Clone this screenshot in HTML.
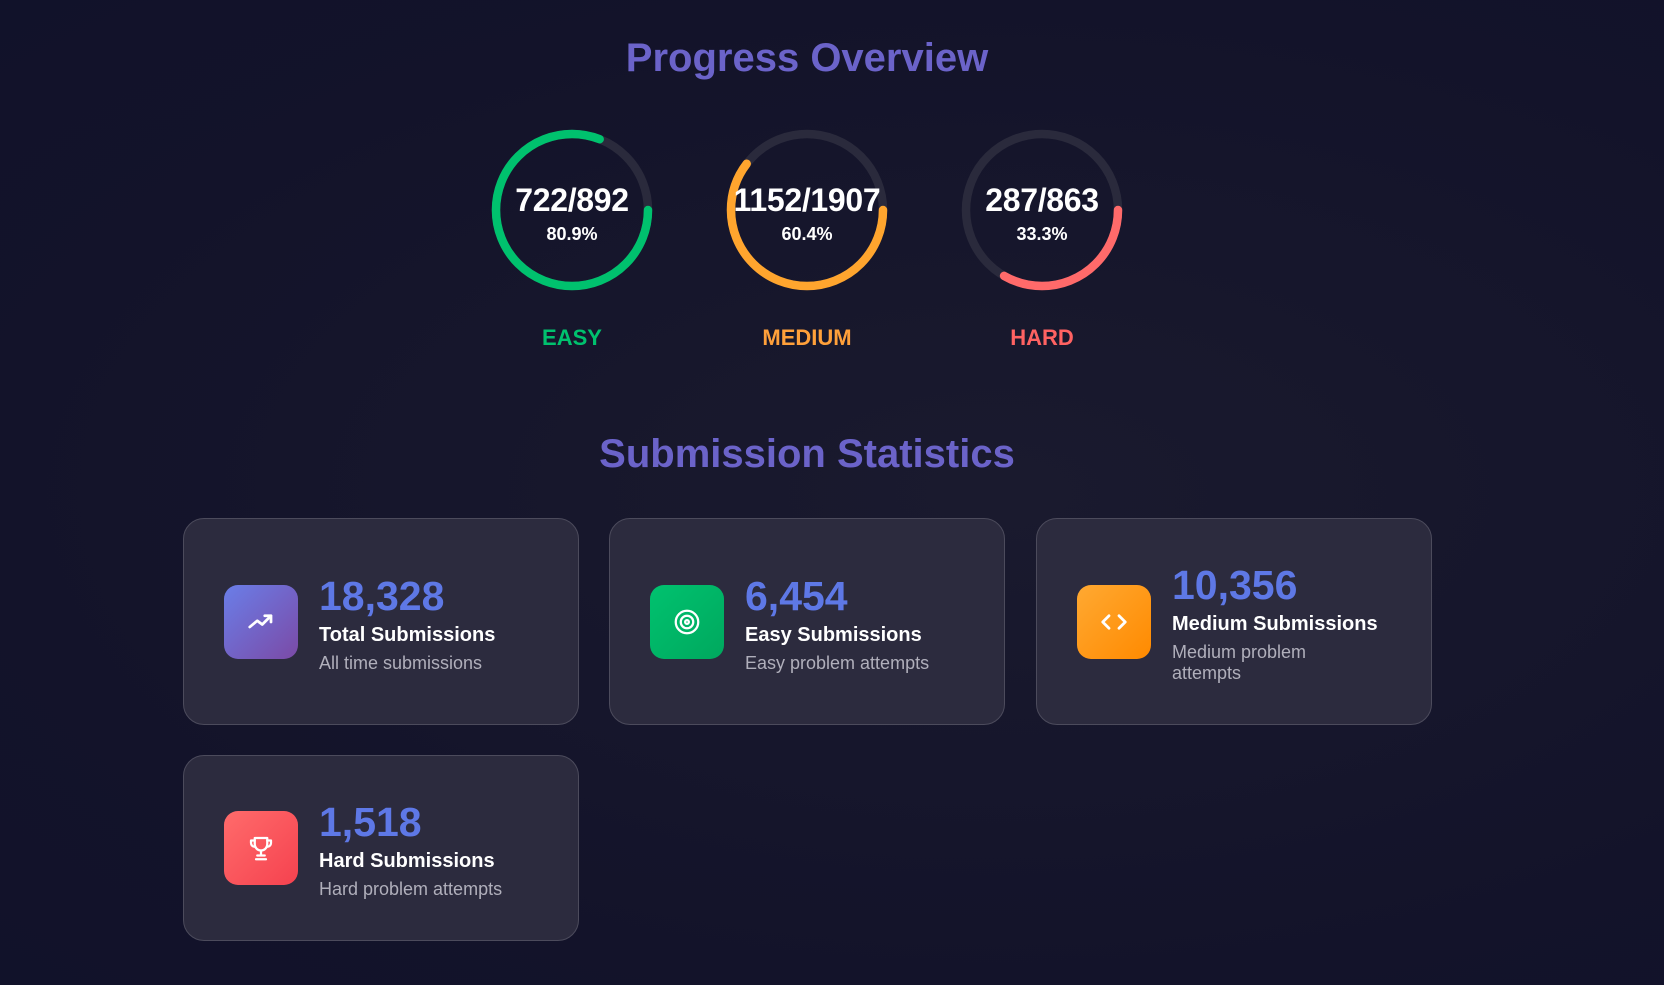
<!DOCTYPE html>
<html><head><style>
*{margin:0;padding:0;box-sizing:border-box}
body{width:1664px;height:985px;background:radial-gradient(ellipse at 60% 50%,#1a1a2e 0%,#13132a 70%,#11122a 100%);font-family:"Liberation Sans",sans-serif;position:relative;overflow:hidden;color:#fff}
.t{position:absolute;left:0;width:1614px;text-align:center;color:#6b63c9;font-weight:bold;font-size:40px}
.ring{position:absolute;width:170px;height:170px}
.num{position:absolute;width:240px;text-align:center;font-weight:bold;font-size:32px;letter-spacing:-0.3px}
.pct{position:absolute;width:200px;text-align:center;font-weight:bold;font-size:18px}
.lab{position:absolute;width:200px;text-align:center;font-weight:bold;font-size:22px}
.card{position:absolute;width:396px;background:#2c2b3e;border:1px solid #4c4b5c;border-radius:21px}
.ic{position:absolute;left:40px;width:74px;height:74px;border-radius:14px;display:flex;align-items:center;justify-content:center}
.tx{position:absolute;left:135px}
.n{color:#5e78e6;font-weight:bold;font-size:41px;line-height:46px}
.l{font-weight:bold;font-size:20px;line-height:26px;margin-top:3px}
.s{color:#b0afbb;font-size:18px;line-height:21px;margin-top:5px}
</style></head><body>
<div class="t" style="top:36px">Progress Overview</div>

<svg class="ring" style="left:487px;top:125px" viewBox="0 0 170 170"><circle cx="85" cy="85" r="76" fill="none" stroke="#2a2a3c" stroke-width="8.5"/><circle cx="85" cy="85" r="76" fill="none" stroke="#00c16e" stroke-width="8.5" stroke-linecap="round" stroke-dasharray="386.3 500"/></svg>
<svg class="ring" style="left:722px;top:125px" viewBox="0 0 170 170"><circle cx="85" cy="85" r="76" fill="none" stroke="#2a2a3c" stroke-width="8.5"/><circle cx="85" cy="85" r="76" fill="none" stroke="#ffa52e" stroke-width="8.5" stroke-linecap="round" stroke-dasharray="288.4 500"/></svg>
<svg class="ring" style="left:957px;top:125px" viewBox="0 0 170 170"><circle cx="85" cy="85" r="76" fill="none" stroke="#2a2a3c" stroke-width="8.5"/><circle cx="85" cy="85" r="76" fill="none" stroke="#ff6a6a" stroke-width="8.5" stroke-linecap="round" stroke-dasharray="159 500"/></svg>

<div class="num" style="left:452px;top:182px">722/892</div>
<div class="num" style="left:687px;top:182px">1152/1907</div>
<div class="num" style="left:922px;top:182px">287/863</div>
<div class="pct" style="left:472px;top:224px">80.9%</div>
<div class="pct" style="left:707px;top:224px">60.4%</div>
<div class="pct" style="left:942px;top:224px">33.3%</div>
<div class="lab" style="left:472px;top:325px;color:#00c16e">EASY</div>
<div class="lab" style="left:707px;top:325px;color:#ffa03a">MEDIUM</div>
<div class="lab" style="left:942px;top:325px;color:#ff6262">HARD</div>

<div class="t" style="top:432px">Submission Statistics</div>

<div class="card" style="left:183px;top:518px;height:207px">
<div class="ic" style="top:66px;background:linear-gradient(135deg,#6a7ee8,#7b4aa6)"><svg width="30" height="30" viewBox="0 0 24 24" fill="none" stroke="#fff" stroke-width="2.2" stroke-linecap="round" stroke-linejoin="round"><path d="M3 16l6-5 4 3 7-7M15 7h5v5"/></svg></div>
<div class="tx" style="top:54px"><div class="n">18,328</div><div class="l">Total Submissions</div><div class="s">All time submissions</div></div></div>

<div class="card" style="left:609px;top:518px;height:207px">
<div class="ic" style="top:66px;background:linear-gradient(135deg,#00c26f,#00a85e)"><svg width="30" height="30" viewBox="0 0 24 24" fill="none" stroke="#fff" stroke-width="1.8"><circle cx="12" cy="12" r="9"/><circle cx="12" cy="12" r="5"/><circle cx="12" cy="12" r="1.5"/></svg></div>
<div class="tx" style="top:54px"><div class="n">6,454</div><div class="l">Easy Submissions</div><div class="s">Easy problem attempts</div></div></div>

<div class="card" style="left:1036px;top:518px;height:207px">
<div class="ic" style="top:66px;background:linear-gradient(135deg,#ffa932,#ff8a00)"><svg width="30" height="30" viewBox="0 0 24 24" fill="none" stroke="#fff" stroke-width="2.2" stroke-linecap="round" stroke-linejoin="round"><path d="M8 7l-5 5 5 5M16 7l5 5-5 5"/></svg></div>
<div class="tx" style="top:43px"><div class="n">10,356</div><div class="l">Medium Submissions</div><div class="s">Medium problem<br>attempts</div></div></div>

<div class="card" style="left:183px;top:755px;height:186px">
<div class="ic" style="top:55px;background:linear-gradient(135deg,#ff6b6b,#f5424f)"><svg width="30" height="30" viewBox="0 0 24 24" fill="none" stroke="#fff" stroke-width="1.8" stroke-linecap="round" stroke-linejoin="round"><path d="M7 4h10v5a5 5 0 0 1-10 0z"/><path d="M7 6H4v2a3 3 0 0 0 3 3M17 6h3v2a3 3 0 0 1-3 3M12 14v4M8 21h8M9 18h6"/></svg></div>
<div class="tx" style="top:43px"><div class="n">1,518</div><div class="l">Hard Submissions</div><div class="s">Hard problem attempts</div></div></div>
</body></html>
